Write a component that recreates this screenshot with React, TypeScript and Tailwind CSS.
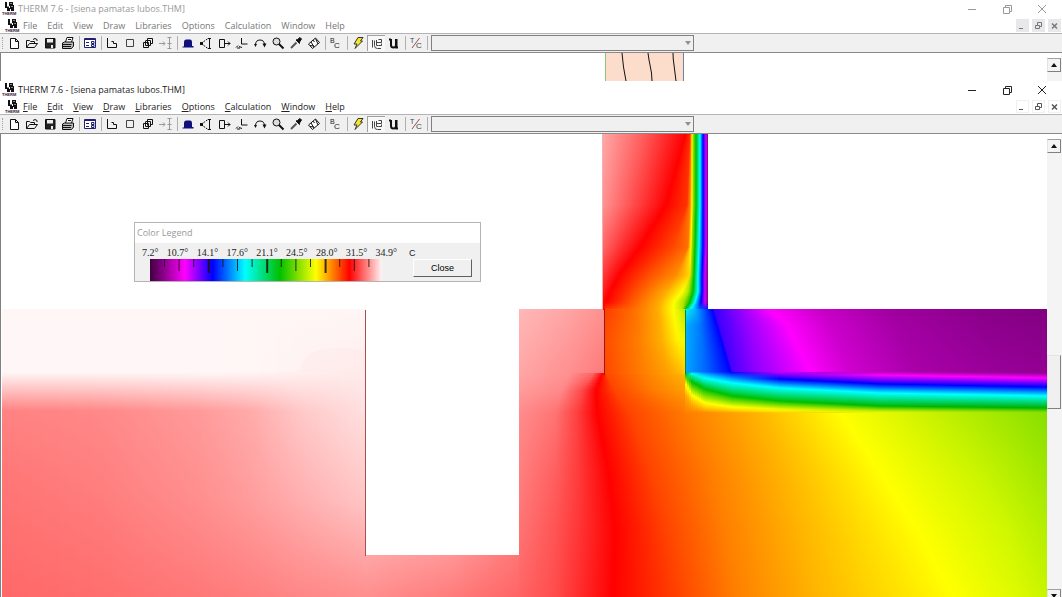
import { useId } from "react";
import type { ReactNode } from "react";
import clsx from "clsx";

type Stop = [pos: number, color: string];
type Line = { at: number; stops: Stop[] };
type MeshData = { axis: "rows" | "columns"; lines: Line[] };

const STEP = 2;

// Temperature field of the section, one mesh per material block.
// A line is a row (or column) of the block, its stops are [position, color] along that line.
const MESHES: MeshData[] = [
  {
    axis: "columns",
    lines: [
      { at: 2, stops: [[309, "#fff6f6"], [372, "#fff7f7"], [411, "#ff8282"], [480, "#ff7676"], [597, "#ff6868"]] },
      { at: 100, stops: [[309, "#fff6f6"], [372, "#fff7f7"], [411, "#ff8888"], [490, "#ff7e7e"], [597, "#ff6e6e"]] },
      { at: 200, stops: [[309, "#fff6f6"], [372, "#fff7f7"], [411, "#ff9a9a"], [500, "#ff8e8e"], [597, "#ff7878"]] },
      { at: 250, stops: [[309, "#fff6f6"], [372, "#fff6f6"], [411, "#ffaaaa"], [500, "#ff9c9c"], [597, "#ff7e7e"]] },
      { at: 300, stops: [[309, "#fff6f6"], [369, "#fff3f3"], [411, "#ffc8c8"], [500, "#ffaeae"], [597, "#ff8686"]] },
      { at: 366, stops: [[309, "#fff6f6"], [360, "#ffeeee"], [411, "#ffe0e0"], [500, "#ffc6c6"], [597, "#ff8e8e"]] },
    ],
  },
  {
    axis: "columns",
    lines: [
      { at: 366, stops: [[555, "#ffa6a6"], [597, "#ff8e8e"]] },
      { at: 450, stops: [[555, "#ff9696"], [597, "#ff7c7c"]] },
      { at: 520, stops: [[555, "#ff7474"], [597, "#ff6464"]] },
    ],
  },
  {
    axis: "rows",
    lines: [
      { at: 309, stops: [[519, "#ffb8b8"], [560, "#ffa8a8"], [605, "#ff9090"]] },
      { at: 374, stops: [[519, "#ffa6a6"], [575, "#ff8c8c"], [605, "#ff7878"]] },
    ],
  },
  {
    axis: "rows",
    lines: [
      {
        at: 373,
        stops: [[519, "#ffa6a6"], [570, "#ff9090"], [594, "#ff6464"], [603, "#ff0000"], [606, "#ff4800"], [645, "#ff7f00"], [684, "#ffb800"], [720, "#ffff00"], [880, "#c0f000"], [1047, "#88e000"]],
      },
      {
        at: 390,
        stops: [[519, "#ff9c9c"], [562, "#ff8888"], [582, "#ff4a4a"], [596, "#ff0000"], [614, "#ff4400"], [655, "#ff7f00"], [710, "#ffb800"], [780, "#ffff00"], [920, "#c0f000"], [1047, "#88e000"]],
      },
      {
        at: 413,
        stops: [[519, "#ff8c8c"], [555, "#ff7474"], [577, "#ff4040"], [597, "#ff0000"], [630, "#ff4400"], [690, "#ff7f00"], [763, "#ffb800"], [840, "#ffff00"], [945, "#c0f000"], [1047, "#88e000"]],
      },
      {
        at: 470,
        stops: [[519, "#ff8080"], [555, "#ff6060"], [578, "#ff3c3c"], [608, "#ff0000"], [650, "#ff4400"], [712, "#ff7f00"], [788, "#ffb800"], [879, "#ffff00"], [980, "#c8f400"], [1047, "#9ee600"]],
      },
      {
        at: 530,
        stops: [[519, "#ff7474"], [555, "#ff5454"], [580, "#ff3434"], [615, "#ff0000"], [667, "#ff4400"], [725, "#ff7f00"], [806, "#ffb800"], [917, "#ffff00"], [1005, "#d0f800"], [1047, "#b4ee00"]],
      },
      {
        at: 597,
        stops: [[519, "#ff6464"], [555, "#ff4c4c"], [580, "#ff2c2c"], [613, "#ff0000"], [680, "#ff4400"], [736, "#ff7f00"], [822, "#ffb800"], [954, "#ffff00"], [1020, "#dcfa00"], [1047, "#c8f400"]],
      },
    ],
  },
  {
    axis: "rows",
    lines: [
      {
        at: 134,
        stops: [[603, "#ffa8a8"], [645, "#ff5a5a"], [686, "#ff0000"], [690, "#ff3000"], [691, "#ff8000"], [692, "#ffff00"], [693, "#a0e000"], [696, "#00c000"], [700, "#00ffff"], [703, "#0000ff"], [706, "#d000ff"], [708, "#800080"]],
      },
      {
        at: 205,
        stops: [[603, "#ff9292"], [635, "#ff4848"], [666, "#ff0000"], [687, "#ff3400"], [690, "#ff8000"], [692, "#ffff00"], [693, "#a0e000"], [696, "#00c000"], [700, "#00ffff"], [703, "#0000ff"], [706, "#d000ff"], [708, "#800080"]],
      },
      {
        at: 247,
        stops: [[603, "#ff6868"], [620, "#ff3434"], [640, "#ff0000"], [672, "#ff4400"], [688, "#ff7000"], [691, "#ffff00"], [692, "#a0e000"], [695, "#00c000"], [699, "#00ffff"], [703, "#0000ff"], [706, "#d000ff"], [708, "#800080"]],
      },
      {
        at: 275,
        stops: [[603, "#ff3c3c"], [610, "#ff2020"], [619, "#ff0000"], [648, "#ff4c00"], [676, "#ff8c00"], [690, "#ffd800"], [691, "#a0e000"], [694, "#00c000"], [698, "#00ffff"], [702, "#0000ff"], [705, "#d000ff"], [708, "#800080"]],
      },
      {
        at: 292,
        stops: [[603, "#ff2020"], [606, "#ff1010"], [610, "#ff0000"], [640, "#ff5c00"], [666, "#ffac00"], [682, "#ffff00"], [688, "#b0e800"], [693, "#00c000"], [698, "#00ffff"], [702, "#0000ff"], [705, "#d000ff"], [708, "#800080"]],
      },
      {
        at: 302,
        stops: [[603, "#ff1000"], [604, "#ff0800"], [606, "#ff0000"], [635, "#ff6000"], [660, "#ffac00"], [674, "#ffff00"], [684, "#a8e000"], [690, "#00c000"], [695, "#00ffff"], [701, "#0000ff"], [705, "#d000ff"], [708, "#800080"]],
      },
      {
        at: 310,
        stops: [[603, "#ff0000"], [604, "#ff1000"], [605, "#ff3800"], [635, "#ff7000"], [658, "#ffac00"], [673, "#ffff00"], [682, "#c0e800"], [685, "#00c000"], [690, "#00ffff"], [700, "#0060ff"], [706, "#0020ff"], [708, "#0010ff"]],
      },
    ],
  },
  {
    axis: "rows",
    lines: [
      { at: 309, stops: [[605, "#ff3c00"], [635, "#ff7000"], [658, "#ffac00"], [673, "#ffff00"], [685, "#b8e800"]] },
      { at: 340, stops: [[605, "#ff4c00"], [638, "#ff7c00"], [662, "#ffb000"], [678, "#fff400"], [685, "#f0fa00"]] },
      { at: 374, stops: [[605, "#ff4800"], [640, "#ff7a00"], [666, "#ff9c00"], [681, "#ffb800"], [685, "#ffd000"]] },
    ],
  },
  {
    axis: "rows",
    lines: [
      {
        at: 309,
        stops: [[685, "#00ffe0"], [695, "#00b4ff"], [712, "#0000ff"], [714, "#3400ff"], [738, "#8c00ff"], [768, "#ff00ff"], [820, "#c800c8"], [887, "#a000a0"], [980, "#8a008a"], [1047, "#800080"]],
      },
      {
        at: 325,
        stops: [[685, "#00b4ff"], [700, "#0078ff"], [717, "#0000ff"], [719, "#3c00ff"], [745, "#9000ff"], [787, "#ff00ff"], [830, "#cc00cc"], [897, "#a400a4"], [985, "#8e008e"], [1047, "#860086"]],
      },
      {
        at: 373,
        stops: [[685, "#00a8ff"], [705, "#0068ff"], [731, "#0000ff"], [733, "#4800ff"], [757, "#9000ff"], [811, "#ff00ff"], [850, "#d000d0"], [918, "#a800a8"], [1000, "#980098"], [1047, "#940094"]],
      },
    ],
  },
  {
    axis: "columns",
    lines: [
      {
        at: 685,
        stops: [[373, "#00c000"], [374, "#00c000"], [375, "#00c000"], [376, "#20c800"], [378, "#80dc00"], [383, "#ffff00"], [395, "#ffa800"], [413, "#ff7f00"]],
      },
      {
        at: 692,
        stops: [[372, "#00a8ff"], [373, "#00e0ff"], [374, "#00ffff"], [375, "#00f0c0"], [382, "#00c000"], [395, "#ffff00"], [404, "#ffb000"], [413, "#ff8000"]],
      },
      {
        at: 705,
        stops: [[372, "#0068ff"], [373, "#0090ff"], [375, "#00c0ff"], [378, "#00ffff"], [389, "#00c000"], [403, "#ffff00"], [408, "#ffc800"], [413, "#ff8800"]],
      },
      {
        at: 732,
        stops: [[372, "#0000ff"], [374, "#0030ff"], [378, "#0090ff"], [383, "#00ffff"], [396, "#00c000"], [407, "#ffff00"], [410, "#ffd800"], [413, "#ffa000"]],
      },
      {
        at: 780,
        stops: [[372, "#c400ff"], [375, "#7000ff"], [379, "#0000ff"], [388, "#00ffff"], [401, "#00c000"], [409, "#e8f800"], [411, "#ffee00"], [413, "#ffc400"]],
      },
      {
        at: 880,
        stops: [[372, "#b800b8"], [375, "#ff00ff"], [384, "#0000ff"], [393, "#00ffff"], [406, "#00b800"], [410, "#a0e400"], [412, "#d8f800"], [413, "#e8fc00"]],
      },
      {
        at: 1047,
        stops: [[373, "#940094"], [378, "#ff00ff"], [387, "#0000ff"], [396, "#00ffff"], [408, "#00b000"], [410, "#40c800"], [412, "#80dc00"], [413, "#88e000"]],
      },
    ],
  },
];

const mix = (a: number, b: number, t: number) => a + (b - a) * t;

function mixColor(a: string, b: string, t: number) {
  const channel = (hex: string, i: number) => parseInt(hex.slice(i, i + 2), 16);
  return `rgb(${[1, 3, 5].map((i) => Math.round(mix(channel(a, i), channel(b, i), t))).join(",")})`;
}

function stopsAt(lines: Line[], at: number) {
  const next = Math.max(1, lines.findIndex((line) => line.at >= at));
  const from = lines[next - 1];
  const to = lines[next];
  const t = (at - from.at) / (to.at - from.at);
  return from.stops.map(([pos, color], i) => ({
    pos: mix(pos, to.stops[i][0], t),
    color: mixColor(color, to.stops[i][1], t),
  }));
}

function Mesh({ mesh }: { mesh: MeshData }) {
  const id = useId();
  const { lines } = mesh;
  const start = lines[0].at;
  const end = lines[lines.length - 1].at;
  const strips = Array.from({ length: Math.ceil((end - start) / STEP) }, (_, i) => start + i * STEP);

  return (
    <g shapeRendering="crispEdges">
      {strips.map((at, i) => {
        const size = Math.min(STEP, end - at);
        const stops = stopsAt(lines, at + size / 2);
        const first = stops[0].pos;
        const last = stops[stops.length - 1].pos;
        const rows = mesh.axis === "rows";
        const gradient = rows ? { x1: first, x2: last, y1: 0, y2: 0 } : { x1: 0, x2: 0, y1: first, y2: last };
        const box = rows
          ? { x: first, y: at, width: last - first, height: size }
          : { x: at, y: first, width: size, height: last - first };
        return (
          <g key={at}>
            <linearGradient id={`${id}${i}`} gradientUnits="userSpaceOnUse" {...gradient}>
              {stops.map((stop, k) => (
                <stop key={k} offset={(stop.pos - first) / (last - first)} stopColor={stop.color} />
              ))}
            </linearGradient>
            <rect {...box} fill={`url(#${id}${i})`} />
          </g>
        );
      })}
    </g>
  );
}

function HeatMap() {
  return (
    <svg viewBox="1 134 1046 463" className="block w-full" role="img" aria-label="Temperature field">
      {MESHES.map((mesh, i) => (
        <Mesh key={i} mesh={mesh} />
      ))}
      <path d="M299 372c2-16 14-24 38-24 12 0 20 1 28 3v21z" fill="#ffeaea" opacity=".5" />
      <path d="M365.500 310V556" stroke="#a85050" />
      <path d="M604.500 309V375" stroke="#a01808" />
      <path d="M685.500 310V374" stroke="#108040" />
      <path d="M602.500 134V309" stroke="#f4b0b0" />
    </svg>
  );
}

function Logo() {
  return (
    <svg viewBox="0 0 14 14" className="size-[14px] shrink-0 overflow-visible" aria-hidden="true">
      <path d="M3 0h2v4h2v2H3zM7 0h4v3h1v4H8V4H7zM5 6h3v3H5zM9 7h3v2H9z" fill="#111" />
      <path d="M8 1.500h2M5 4.500h2M9 4.500h2" stroke="#889" />
      <text x="0" y="13" fontSize="4" fontWeight="700" fill="#301030" fontFamily="Liberation Sans">
        THERM
      </text>
    </svg>
  );
}

type Tool = { label: string; icon: ReactNode; pressed?: boolean };

const TOOL_GROUPS: Tool[][] = [
  [
    { label: "New", icon: <path d="M3.500 2.500h5l3 3v7h-8zM8.500 2.500v3h3" fill="#fff" /> },
    {
      label: "Open",
      icon: <path d="M1.500 11.500v-7h3l1 1h4v2M1.500 11.500l3-4h8l-3 4zM8 3.500q2-2 4 0v1.500" fill="none" />,
    },
    {
      label: "Save",
      icon: (
        <>
          <path d="M2.500 2.500h9.500v9.500h-9.500z" fill="#222" />
          <path d="M4 3h6v3.500H4z" fill="#eee" stroke="none" />
          <path d="M8 9h2v3H8z" fill="#eee" stroke="none" />
        </>
      ),
    },
    {
      label: "Print",
      icon: (
        <>
          <path d="M4.500 6l1.500-4.500h6L10.500 6" fill="#fff" />
          <path d="M1.500 7l2-1h9v4l-2 2.500h-9z" fill="#bbb" />
          <path d="M2 8.500h8.500M2 10.500h8M7 3.500h3" />
        </>
      ),
    },
  ],
  [
    {
      label: "Options",
      icon: (
        <g stroke="#202070">
          <path d="M1.500 2.500h11v9h-11z" fill="#fff" />
          <path d="M1.500 3.500h11M3 6.500h3M3 9.500h3M8.500 5.500h2.500v2h-2.500zM8.500 8.500h2.500v2h-2.500z" fill="none" />
        </g>
      ),
    },
  ],
  [
    { label: "Polygon", icon: <path d="M2.500 2v9.500h9v-4h-3v-2h-2" fill="none" /> },
    { label: "Rectangle", icon: <path d="M3.500 3.500h7v7h-7z" fill="none" stroke="#444" /> },
    {
      label: "Repeat",
      icon: <path d="M2.500 6.500h5v5h-5zM4.500 5v4.500h5M4.500 4.500h5v5M6.500 4V2.500h5v5h-2M6.500 3v5.500" fill="none" />,
    },
    {
      label: "Move point",
      icon: <path d="M0 7.500h6M4 5.500l2 2-2 2M10.500 1v12M8.500 1.500h4M8.500 12.500h4M8.500 7.500h4" fill="none" stroke="#999" />,
    },
  ],
  [
    {
      label: "Void",
      icon: <path d="M3 10.500V6q0-2.500 2-2.500h4q2 0 2 3v3.500h1.500v1.500h-11v-1z" fill="#10107c" stroke="none" />,
    },
    {
      label: "Edit points",
      icon: (
        <>
          <path d="M2 7.500l7-5M2 7.500l7 5" strokeDasharray="2 1" fill="none" />
          <path d="M10.500 2v11M9 2.500h3M9 12.500h3" />
          <path d="M1 6h3v3H1z" fill="#111" stroke="none" />
        </>
      ),
    },
    { label: "Extend", icon: <path d="M2.500 3.500h5v8h-5zM7 7.500h6M11 5.500l2 2-2 2" fill="none" /> },
    {
      label: "Origin",
      icon: <path d="M6.500 2v6h6M1 11.500l2-2M4 10.500l3 1M2 12h3" fill="none" />,
    },
    {
      label: "Rotate",
      icon: (
        <>
          <path d="M2.500 9q0-5 4.500-5t4.500 5" fill="none" />
          <path d="M1 8h3l-1.500 3zM9.500 7.500h4l-2 4z" fill="#111" stroke="none" />
        </>
      ),
    },
    {
      label: "Zoom",
      icon: (
        <>
          <circle cx="5.500" cy="5.500" r="3.500" fill="#ddd" />
          <path d="M8 8l4.500 4.500" strokeWidth="2" />
        </>
      ),
    },
    {
      label: "Pick",
      icon: (
        <>
          <path d="M2 12l5.500-5.500" strokeWidth="2" stroke="#555" />
          <path d="M7 4l1.500-.5L11 1.500 12.500 3l-2 3v1.500z" fill="#111" />
        </>
      ),
    },
    {
      label: "Measure",
      icon: (
        <>
          <path d="M1.500 8l7-6 4 4.500-7 6z" fill="#fff" />
          <path d="M4 6l3 5M6 4l1.500 2M8.500 2.500L11 8M3 9.500l4 .5" />
        </>
      ),
    },
  ],
  [
    {
      label: "Boundary conditions",
      icon: (
        <g stroke="none" fill="#222" fontFamily="Liberation Sans">
          <text x="1" y="7" fontSize="7">B</text>
          <text x="5" y="12" fontSize="8">C</text>
        </g>
      ),
    },
  ],
  [
    {
      label: "Calculate",
      icon: <path d="M7 1.500h5L9.500 5h2L4 12.500 6 8H3z" fill="#f0e828" stroke="#333" />,
    },
    {
      label: "Show results",
      pressed: true,
      icon: <path d="M2.500 3v7.500M4.500 3.500v5q0 3 3 3h3.500M6.500 3v5.500h2M8.500 2.500h3v3M6.500 5.500h5M8.500 8.500h3v-2" fill="none" stroke="#444" />,
    },
    {
      label: "U-factors",
      icon: <path d="M4 3v6q0 2.500 2.500 2.500T9 9V3M9.500 3v8.500H11M2 3.500h2" fill="none" strokeWidth="2" />,
    },
  ],
  [
    {
      label: "Temperature at cursor",
      icon: (
        <>
          <path d="M3 12L10.500 2" stroke="#a04848" />
          <g stroke="none" fill="#444" fontFamily="Liberation Sans">
            <text x="1" y="7" fontSize="7">T</text>
            <text x="7" y="12" fontSize="8">C</text>
          </g>
        </>
      ),
    },
  ],
];

const MENUS = ["File", "Edit", "View", "Draw", "Libraries", "Options", "Calculation", "Window", "Help"];

function Toolbar() {
  return (
    <div className="flex h-5 items-center border-y border-t-[#b4b4b4] border-b-[#8a8a8a] bg-[#f0f0f0] pl-0.5">
      <span className="mr-0.5 h-3 border-l border-dotted border-[#a0a0a0]" />
      {TOOL_GROUPS.map((group, i) => (
        <div key={i} className="flex items-center">
          {group.map((tool) => (
            <button
              key={tool.label}
              type="button"
              aria-label={tool.label}
              className={clsx(
                "flex h-4 w-[18px] items-center justify-center",
                tool.pressed && "border-t border-l border-[#a0a0a0] bg-[#f8f8f8]",
              )}
            >
              <svg viewBox="0 0 14 14" className="size-[14px] shrink-0" stroke="#111" strokeWidth="1">
                {tool.icon}
              </svg>
            </button>
          ))}
          <span className="mr-px ml-0.5 h-[14px] w-px bg-[#b0b0b0]" />
        </div>
      ))}
      <div className="ml-0.5 grid h-4 w-[263px] items-center border border-[#808080]">
        <select
          aria-label="Material"
          disabled
          className="col-start-1 row-start-1 h-3 w-full appearance-none bg-[#f0f0f0]"
        />
        <svg viewBox="0 0 6 4" className="col-start-1 row-start-1 mr-0.5 h-1 w-1.5 justify-self-end">
          <path d="M0 0h6L3 4z" fill="#909090" />
        </svg>
      </div>
    </div>
  );
}

const CONTROLS = [
  { label: "Minimize", icon: <path d="M1 5.500h8" fill="none" /> },
  { label: "Restore", icon: <path d="M1.500 3.500h6v6h-6zM3.500 3V1.500h6v6H8" fill="none" /> },
  { label: "Close", icon: <path d="M1 1l8 8M9 1L1 9" fill="none" /> },
];

const CHILD_CONTROLS = [
  { label: "Minimize document", icon: <path d="M1 7.500h4" fill="none" /> },
  { label: "Restore document", icon: <path d="M1.500 4.500h4v3h-4zM3.500 4V1.500h4v4H6" fill="none" /> },
  { label: "Close document", icon: <path d="M2 2.500l5 5M7 2.500l-5 5" fill="none" strokeWidth="1.500" /> },
];

function WindowHeader({ active }: { active: boolean }) {
  return (
    <header>
      <div className="flex h-[18px] items-center bg-white pl-0.5">
        <Logo />
        <h1 className={clsx("ml-0.5 grow text-[9px] leading-4", active ? "text-[#222]" : "text-[#999]")}>
          THERM 7.6 - [siena pamatas lubos.THM]
        </h1>
        <div className="flex pr-[3px]">
          {CONTROLS.map((control) => (
            <button
              key={control.label}
              type="button"
              aria-label={control.label}
              className="flex h-4 w-[35px] items-center justify-center"
            >
              <svg viewBox="0 0 10 10" className="size-[10px]" stroke={active ? "#222" : "#999"}>
                {control.icon}
              </svg>
            </button>
          ))}
        </div>
      </div>
      <div className="flex h-[15px] items-center bg-white pl-[5px]">
        <Logo />
        <nav
          className={clsx(
            "ml-1 flex grow gap-2.5 text-[9px] leading-4",
            active ? "text-[#222]" : "text-[#777]",
          )}
        >
          {MENUS.map((menu) => (
            <button key={menu} type="button">
              <span className={clsx(active && "underline")}>{menu[0]}</span>
              {menu.slice(1)}
            </button>
          ))}
        </nav>
        <div className="flex gap-[3px] pr-px">
          {CHILD_CONTROLS.map((control) => (
            <button
              key={control.label}
              type="button"
              aria-label={control.label}
              className={clsx(
                "flex size-[13px] items-center justify-center",
                active ? "border border-[#f0f0f0] bg-white" : "bg-[#e8e8ea]",
              )}
            >
              <svg viewBox="0 0 9 9" className="size-[9px] shrink-0" stroke={active ? "#555" : "#777"}>
                {control.icon}
              </svg>
            </button>
          ))}
        </div>
      </div>
      <Toolbar />
    </header>
  );
}

function ScrollButton({ label, path }: { label: string; path: string }) {
  return (
    <button
      type="button"
      aria-label={label}
      className="flex h-[14px] w-full shrink-0 items-center justify-center border border-t-[#a0a0a0] border-r-[#808080] border-b-[#808080] border-l-[#e4e4e4] bg-[#f4f4f4]"
    >
      <svg viewBox="0 0 6 4" className="h-1 w-1.5">
        <path d={path} fill="#111" />
      </svg>
    </button>
  );
}

const LEGEND_LABELS = ["7.2°", "10.7°", "14.1°", "17.6°", "21.1°", "24.5°", "28.0°", "31.5°", "34.9°"];

function LegendScale() {
  return (
    <svg viewBox="0 0 232 22" className="block h-[22px] w-[232px]" role="img" aria-label="Color scale">
      <linearGradient id="legend-scale">
        <stop offset="0" stopColor="#400040" />
        <stop offset="0.150" stopColor="#ff00ff" />
        <stop offset="0.270" stopColor="#0000ff" />
        <stop offset="0.410" stopColor="#00ffff" />
        <stop offset="0.560" stopColor="#00c000" />
        <stop offset="0.715" stopColor="#ffff00" />
        <stop offset="0.860" stopColor="#ff0000" />
        <stop offset="1" stopColor="#fff4f4" />
      </linearGradient>
      <rect width="232" height="22" fill="url(#legend-scale)" />
      {Array.from({ length: 15 }, (_, i) => {
        const major = i % 4 === 3;
        const height = major ? 14 : i % 2 ? 12 : 8;
        return <rect key={i} x={14 + i * 14.6} width={major ? 2 : 1} height={height} fill="#201010" opacity=".85" />;
      })}
    </svg>
  );
}

function ColorLegend() {
  return (
    <section className="absolute top-[88px] left-[133px] w-[347px] border border-[#b4b4b4] bg-[#f0f0f0]">
      <h2 className="bg-white pl-0.5 text-[9px] leading-5 text-[#999]">Color Legend</h2>
      <div className="flex h-[38px]">
        <div className="flex flex-col justify-between pt-1">
          <div className="flex w-[262px] justify-between pl-[7px] font-['Liberation_Serif',serif] text-[10px] leading-3 text-[#222]">
            {LEGEND_LABELS.map((label) => (
              <span key={label}>{label}</span>
            ))}
          </div>
          <div className="pl-[15px]">
            <LegendScale />
          </div>
        </div>
        <div className="flex flex-col items-start pt-1 pl-3 font-['Liberation_Sans',sans-serif] text-[9px]">
          <span className="leading-3 text-[#222]">C</span>
          <button
            type="button"
            className="ml-1 h-[18px] w-[59px] border border-t-white border-r-[#606060] border-b-[#606060] border-l-white bg-[#f0f0f0] leading-4 text-black"
          >
            Close
          </button>
        </div>
      </div>
    </section>
  );
}

export default function App() {
  return (
    <div className="flex h-screen flex-col overflow-hidden bg-white font-['Open_Sans','Noto_Sans',sans-serif]">
      <section>
        <WindowHeader active={false} />
        <div className="flex h-7 overflow-hidden border-l border-[#808080]">
          <div className="min-w-0 grow">
            <svg viewBox="1 53 1046 28" className="block w-full" role="img" aria-label="Wall section">
              <rect x="605" y="53" width="79" height="28" fill="#fcdccb" />
              <path d="M605.500 53V81" stroke="#90c878" />
              <path d="M683.500 53V81" stroke="#7080a0" />
              <path d="M622 53q1 14 4 28M648 53q1 8 2 12 2 8 2 16M673 53q0 6 1 12l2 16" stroke="#111" fill="none" />
            </svg>
          </div>
          <div className="w-[15px] shrink-0 bg-[#f4f4f4] pr-px">
            <div className="h-[5px] bg-white" />
            <ScrollButton label="Scroll up" path="M0 4h6L3 0z" />
          </div>
        </div>
      </section>
      <section className="flex min-h-0 grow flex-col">
        <WindowHeader active />
        <div className="flex min-h-0 grow overflow-hidden border-l border-[#808080]">
          <main className="relative min-w-0 grow">
            <HeatMap />
            <ColorLegend />
          </main>
          <div className="-mb-1.5 flex w-[15px] shrink-0 flex-col bg-[#f4f4f4] pr-px">
            <div className="h-[5px] bg-white" />
            <ScrollButton label="Scroll up" path="M0 4h6L3 0z" />
            <div className="grow-[203]" />
            <div className="h-[54px] border border-t-[#e4e4e4] border-r-[#808080] border-b-[#808080] border-l-[#e4e4e4] bg-[#f0f0f0]" />
            <div className="grow-[181]" />
            <ScrollButton label="Scroll down" path="M0 0h6L3 4z" />
          </div>
        </div>
      </section>
    </div>
  );
}
